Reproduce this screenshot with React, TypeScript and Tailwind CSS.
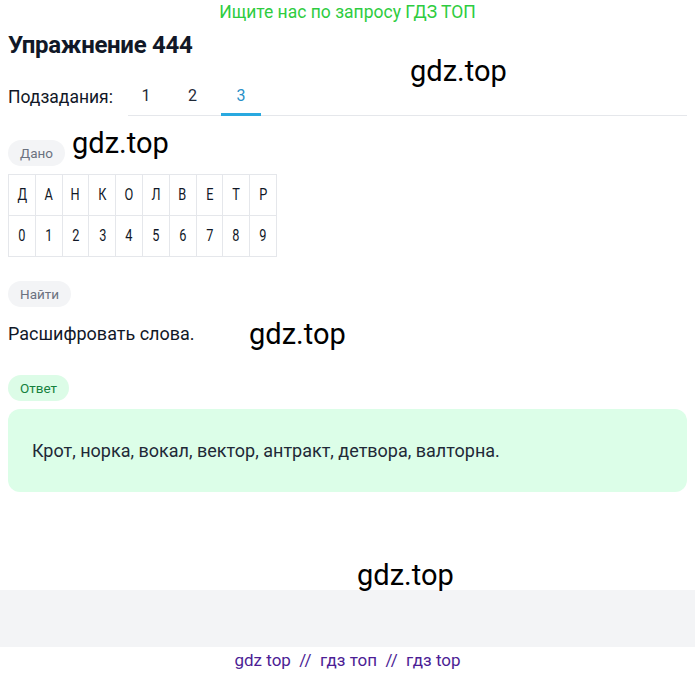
import React from 'react'

const letters = ['Д', 'А', 'Н', 'К', 'О', 'Л', 'В', 'Е', 'Т', 'Р']
const digits = ['0', '1', '2', '3', '4', '5', '6', '7', '8', '9']

function Badge({ label, green }: { label: string; green?: boolean }) {
  return (
    <span
      className={
        green
          ? 'inline-flex h-[26px] items-center rounded-full bg-[#dcfce7] px-3 text-[13.5px] text-[#15803d]'
          : 'inline-flex h-[26px] items-center rounded-full bg-[#f3f4f6] px-3 text-[13.5px] text-[#6b7280]'
      }
    >
      {label}
    </span>
  )
}

function Mark({ className }: { className: string }) {
  return (
    <span className={'pointer-events-none absolute text-[29px] leading-none text-black ' + className}>
      gdz.top
    </span>
  )
}

export default function App() {
  return (
    <div className="relative flex min-h-[675px] w-[695px] flex-col bg-white font-['Roboto',sans-serif] text-[#1f2937]">
      {/* top banner */}
      <div className="pt-[1px] text-center text-[17.5px] leading-[22px] text-[#2ecc40]">
        Ищите нас по запросу ГДЗ ТОП
      </div>

      <div className="flex flex-col px-2">
        <h1 className="mt-[9px] text-[24px] font-bold leading-[26px] tracking-[-0.3px] text-[#111827]">
          Упражнение 444
        </h1>

        {/* subtasks */}
        <div className="mt-[27px] flex items-end">
          <span className="pb-[8px] text-[17.5px] leading-[22px] text-[#111827]">Подзадания:</span>
          <div className="ml-[15px] flex flex-1 border-b border-[#e5e7eb]">
            <span className="w-[36px] pb-[8px] text-center text-[16px] leading-[22px]">1</span>
            <span className="w-[57px] pb-[8px] text-center text-[16px] leading-[22px]">2</span>
            <span className="-mb-px w-[40px] border-b-[3px] border-[#29a9e0] pb-[6px] text-center text-[16px] leading-[22px] text-[#2a8fc7]">
              3
            </span>
          </div>
        </div>

        <div className="mt-[24px]">
          <Badge label="Дано" />
        </div>

        <table className="mt-[8px] w-[269px] table-fixed border-collapse self-start text-[17px] text-[#111827]">
          <tbody>
            <tr>
              {letters.map((l) => (
                <td key={l} className="h-[41px] border border-[#e5e7eb] p-0 text-center">
                  <span className="inline-block scale-x-[0.75]">{l}</span>
                </td>
              ))}
            </tr>
            <tr>
              {digits.map((d) => (
                <td key={d} className="h-[41px] border border-[#e5e7eb] p-0 text-center">
                  <span className="inline-block scale-x-[0.75]">{d}</span>
                </td>
              ))}
            </tr>
          </tbody>
        </table>

        <div className="mt-[24px]">
          <Badge label="Найти" />
        </div>

        <p className="mt-[16px] text-[18px] leading-[22px] text-[#111827]">Расшифровать слова.</p>

        <div className="mt-[30px]">
          <Badge label="Ответ" green />
        </div>

        <div className="mt-[8px] flex h-[83px] items-center rounded-[12px] bg-[#dcfee8] px-6">
          <p className="text-[18px] leading-[22px] text-[#1f2937]">
            Крот, норка, вокал, вектор, антракт, детвора, валторна.
          </p>
        </div>
      </div>

      <div className="mt-[98px] h-[57px] bg-[#f3f4f6]" />

      <div className="pt-[2px] text-center text-[17px] leading-[22px] text-[#4c1d95]">
        gdz top &nbsp;//&nbsp; гдз топ &nbsp;//&nbsp; гдз top
      </div>

      <Mark className="left-[410px] top-[57px]" />
      <Mark className="left-[72px] top-[129px]" />
      <Mark className="left-[249px] top-[320px]" />
      <Mark className="left-[357px] top-[561px]" />
    </div>
  )
}
